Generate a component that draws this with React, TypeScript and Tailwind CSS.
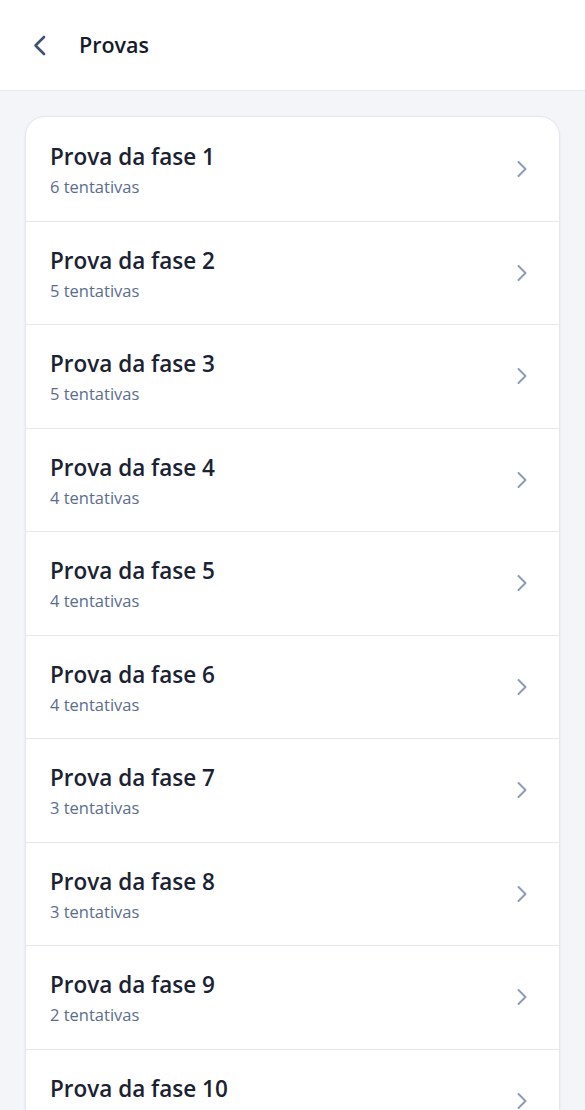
const provas = [
  { fase: 1, tentativas: 6 },
  { fase: 2, tentativas: 5 },
  { fase: 3, tentativas: 5 },
  { fase: 4, tentativas: 4 },
  { fase: 5, tentativas: 4 },
  { fase: 6, tentativas: 4 },
  { fase: 7, tentativas: 3 },
  { fase: 8, tentativas: 3 },
  { fase: 9, tentativas: 2 },
  { fase: 10, tentativas: 2 },
];

export default function App() {
  return (
    <div
      className="min-h-screen bg-[#f4f5f9] overflow-hidden"
      style={{ fontFamily: '"Open Sans", "Noto Sans", sans-serif' }}
    >
      {/* Header */}
      <header className="h-[91px] bg-white border-b border-[#e6e8ee] flex items-center pl-[33px]">
        <svg width="13" height="21" viewBox="0 0 13 21" fill="none">
          <path d="M11 2 L2.5 10.5 L11 19" stroke="#3d5178" strokeWidth="2.6" strokeLinecap="round" strokeLinejoin="round" />
        </svg>
        <h1 className="ml-[33px] text-[21.5px] font-semibold text-[#141b2b]">Provas</h1>
      </header>

      {/* List */}
      <div className="px-[25px] pt-[25px]">
        <div className="bg-white rounded-[20px] border border-[#e4e7ee] shadow-[0_1px_3px_rgba(20,30,60,0.06)] overflow-hidden">
          {provas.map((p, i) => (
            <div
              key={p.fase}
              className={
                'flex items-center justify-between pl-[24px] pr-[31px] h-[103.5px] ' +
                (i > 0 ? 'border-t border-[#e6e8ee]' : '')
              }
            >
              <div className="flex flex-col pt-[4px]">
                <span className="text-[22.5px] leading-[28px] font-semibold text-[#1a2233]">
                  Prova da fase {p.fase}
                </span>
                <span className="text-[16.5px] leading-[24px] text-[#5b6d8f] mt-[4px]">
                  {p.tentativas} tentativas
                </span>
              </div>
              <svg width="12" height="18" viewBox="0 0 12 18" fill="none">
                <path d="M2.5 2 L9.5 9 L2.5 16" stroke="#8d9bb8" strokeWidth="2" strokeLinecap="round" strokeLinejoin="round" />
              </svg>
            </div>
          ))}
        </div>
      </div>
    </div>
  );
}
